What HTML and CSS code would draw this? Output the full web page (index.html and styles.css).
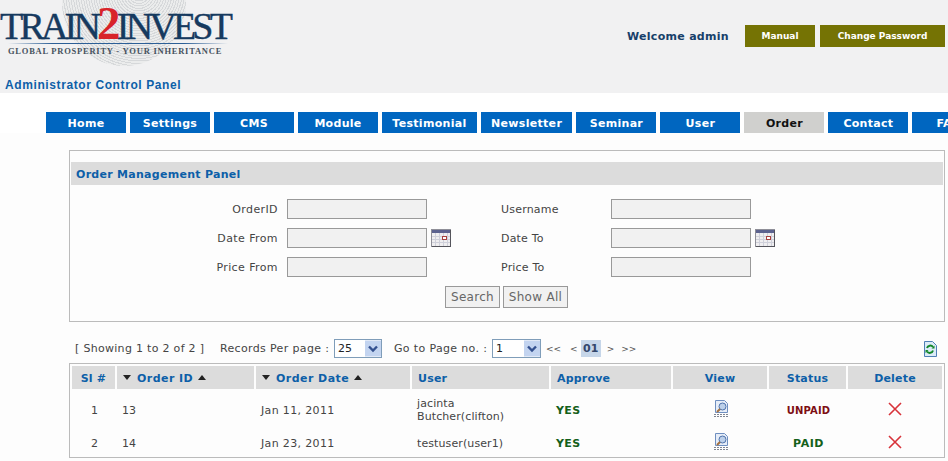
FILE: index.html
```html
<!DOCTYPE html>
<html lang="en">
<head>
  <meta charset="UTF-8">
  <title>Administrator Control Panel</title>
  <link rel="stylesheet" href="styles.css">
</head>
<body>
  <div class="header">
    <div class="brand">
      <div class="logo">
        <div class="swirl"></div>
        <div class="logo-name">TRAIN<span class="logo-two">2</span>INVEST</div>
        <div class="logo-rule"></div>
        <div class="logo-tag">GLOBAL PROSPERITY - YOUR INHERITANCE</div>
      </div>
      <div class="panel-name">Administrator Control Panel</div>
    </div>
    <div class="account">
      <span class="welcome">Welcome admin</span>
      <a class="olive-btn manual">Manual</a>
      <a class="olive-btn password">Change Password</a>
    </div>
  </div>

  <div class="nav">
    <a class="tab">Home</a>
    <a class="tab">Settings</a>
    <a class="tab">CMS</a>
    <a class="tab">Module</a>
    <a class="tab">Testimonial</a>
    <a class="tab">Newsletter</a>
    <a class="tab">Seminar</a>
    <a class="tab">User</a>
    <a class="tab active">Order</a>
    <a class="tab">Contact</a>
    <a class="tab">FAQs</a>
  </div>

  <div class="content">
    <div class="search-panel">
      <div class="panel-title">Order Management Panel</div>
      <div class="search-form">
        <label class="left-label">OrderID</label>
        <input class="field" type="text">
        <span></span>
        <label>Username</label>
        <input class="field" type="text">
        <span></span>

        <label class="left-label">Date From</label>
        <input class="field" type="text">
        <svg class="cal" width="20" height="18" viewBox="0 0 20 18">
          <rect x="0.5" y="0.5" width="19" height="17" fill="#efeef0" stroke="#8f8f98"/>
          <rect x="1" y="1" width="18" height="3" fill="#5c628f"/>
          <path d="M1 7.500h18M1 10.500h18M1 13.500h18M4.500 4v13M8.500 4v13M12.500 4v13M16.500 4v13" stroke="#cfd0da"/>
          <rect x="11.500" y="7.500" width="4" height="3" fill="#fff" stroke="#a8413f"/>
          <path d="M19.500 1v17M1 17.500h19" stroke="#55555c"/>
        </svg>
        <label>Date To</label>
        <input class="field" type="text">
        <svg class="cal" width="20" height="18" viewBox="0 0 20 18">
          <rect x="0.5" y="0.5" width="19" height="17" fill="#efeef0" stroke="#8f8f98"/>
          <rect x="1" y="1" width="18" height="3" fill="#5c628f"/>
          <path d="M1 7.500h18M1 10.500h18M1 13.500h18M4.500 4v13M8.500 4v13M12.500 4v13M16.500 4v13" stroke="#cfd0da"/>
          <rect x="11.500" y="7.500" width="4" height="3" fill="#fff" stroke="#a8413f"/>
          <path d="M19.500 1v17M1 17.500h19" stroke="#55555c"/>
        </svg>

        <label class="left-label">Price From</label>
        <input class="field" type="text">
        <span></span>
        <label>Price To</label>
        <input class="field" type="text">
        <span></span>
      </div>
      <div class="search-actions">
        <button class="plain-btn search">Search</button>
        <button class="plain-btn showall">Show All</button>
      </div>
    </div>

    <div class="pager">
      <span class="showing">[ Showing 1 to 2 of 2 ]</span>
      <span class="per-page">Records Per page :</span>
      <span class="select-box box-perpage">
        <select><option>25</option></select>
        <svg class="select-arrow" width="16" height="16" viewBox="0 0 16 16"><rect width="16" height="16" fill="#c3d4f0"/><path d="M4 6l4 4 4-4" fill="none" stroke="#33508f" stroke-width="2.400"/></svg>
      </span>
      <span class="go-to">Go to Page no. :</span>
      <span class="select-box box-page">
        <select><option>1</option></select>
        <svg class="select-arrow" width="16" height="16" viewBox="0 0 16 16"><rect width="16" height="16" fill="#c3d4f0"/><path d="M4 6l4 4 4-4" fill="none" stroke="#33508f" stroke-width="2.400"/></svg>
      </span>
      <a class="page-link first">&lt;&lt;</a>
      <a class="page-link prev">&lt;</a>
      <span class="page-now">01</span>
      <a class="page-link next">&gt;</a>
      <a class="page-link last">&gt;&gt;</a>
      <svg class="refresh" width="14" height="16" viewBox="0 0 14 16">
        <path d="M1.500 .5h8l4 4v11h-12z" fill="#dcebf8" stroke="#4f7fb5"/>
        <path d="M4 7a3.400 3.400 0 0 1 6-1M10 9.500a3.400 3.400 0 0 1-6 1" fill="none" stroke="#14872a" stroke-width="2"/>
        <path d="M8.500 7.500h3v-3zM5.500 9h-3v3z" fill="#14872a"/>
      </svg>
    </div>

    <div class="list-box">
      <table class="orders">
        <colgroup>
          <col class="c-sl"><col class="c-id"><col class="c-date"><col class="c-user">
          <col class="c-approve"><col class="c-view"><col class="c-status"><col class="c-delete">
        </colgroup>
        <tr>
          <th class="center">Sl #</th>
          <th class="sortable"><span class="sort down"></span>Order ID<span class="sort up"></span></th>
          <th class="sortable"><span class="sort down"></span>Order Date<span class="sort up"></span></th>
          <th>User</th>
          <th>Approve</th>
          <th class="center">View</th>
          <th class="center">Status</th>
          <th class="center">Delete</th>
        </tr>
        <tr class="tall">
          <td class="center">1</td>
          <td>13</td>
          <td class="date">Jan 11, 2011</td>
          <td>jacinta<br>Butcher(clifton)</td>
          <td class="yes">YES</td>
          <td class="center">
            <svg class="view-icon" width="15" height="17" viewBox="0 0 15 17">
              <path d="M1.500 .5h9l3 3v9h-12z" fill="#e6edf8" stroke="#6f8fc0"/>
              <circle cx="8.500" cy="6.500" r="3.500" fill="#bcd0ea" stroke="#4f74ad"/>
              <path d="M6 9l-3 3" stroke="#a5713f" stroke-width="2"/>
              <path d="M0 14.500h15M0 16.500h15" stroke="#7f8592" stroke-dasharray="2 1"/>
            </svg>
          </td>
          <td class="center unpaid">UNPAID</td>
          <td class="center">
            <svg class="del-icon" width="14" height="14" viewBox="0 0 14 14"><path d="M1 1l12 12M13 1L1 13" stroke="#d8333a" stroke-width="1.600"/></svg>
          </td>
        </tr>
        <tr class="short">
          <td class="center">2</td>
          <td>14</td>
          <td class="date">Jan 23, 2011</td>
          <td>testuser(user1)</td>
          <td class="yes">YES</td>
          <td class="center">
            <svg class="view-icon" width="15" height="17" viewBox="0 0 15 17">
              <path d="M1.500 .5h9l3 3v9h-12z" fill="#e6edf8" stroke="#6f8fc0"/>
              <circle cx="8.500" cy="6.500" r="3.500" fill="#bcd0ea" stroke="#4f74ad"/>
              <path d="M6 9l-3 3" stroke="#a5713f" stroke-width="2"/>
              <path d="M0 14.500h15M0 16.500h15" stroke="#7f8592" stroke-dasharray="2 1"/>
            </svg>
          </td>
          <td class="center paid">PAID</td>
          <td class="center">
            <svg class="del-icon" width="14" height="14" viewBox="0 0 14 14"><path d="M1 1l12 12M13 1L1 13" stroke="#d8333a" stroke-width="1.600"/></svg>
          </td>
        </tr>
      </table>
    </div>
  </div>
</body>
</html>
```

FILE: styles.css
```css
html, body {
  margin: 0;
  height: 461px;
  overflow: hidden;
}
body {
  width: 948px;
  background: #fdfdfd;
  font-family: "DejaVu Sans", Verdana, sans-serif;
  font-size: 11px;
  color: #444;
}

/* header */
.header {
  display: flex;
  justify-content: space-between;
  height: 93px;
  background: #f1f1f2;
}
.logo {
  position: relative;
  width: 240px;
  height: 70px;
}
.swirl {
  position: absolute;
  left: 62px;
  top: -60px;
  width: 124px;
  height: 126px;
  border-radius: 50%;
  background: repeating-radial-gradient(circle at 62% 42%, #d6d8da 0 1px, #ebecec 1px 2.500px);
}
.logo-name {
  position: absolute;
  left: 0;
  top: 3px;
  font-family: "Liberation Serif", serif;
  font-size: 38px;
  line-height: 46px;
  letter-spacing: -3.800px;
  color: #163a5f;
  -webkit-text-stroke: .4px #163a5f;
  white-space: nowrap;
}
.logo-two {
  font-size: 47px;
  line-height: 40px;
  font-weight: bold;
  color: #d8232a;
  -webkit-text-stroke: 0;
}
.logo-rule {
  position: absolute;
  left: 8px;
  top: 43px;
  width: 220px;
  height: 1px;
  background: linear-gradient(to right, #f1f1f2, #2c5f96 20%, #2c5f96 80%, #f1f1f2);
}
.logo-tag {
  position: absolute;
  left: 8px;
  top: 46px;
  font-family: "Liberation Serif", serif;
  font-weight: bold;
  font-size: 8.500px;
  line-height: 11px;
  letter-spacing: .76px;
  color: #46525e;
  white-space: nowrap;
}
.panel-name {
  margin: 7px 0 0 5px;
  font-family: "Liberation Sans", Arial, sans-serif;
  font-weight: bold;
  font-size: 12px;
  line-height: 16px;
  letter-spacing: .6px;
  color: #0d5fa8;
}
.account {
  display: flex;
  align-items: center;
  height: 22px;
  margin: 25px 3px 0 0;
}
.welcome {
  font-weight: bold;
  letter-spacing: .3px;
  color: #17406a;
  margin-right: 16px;
}
.olive-btn {
  display: block;
  height: 22px;
  line-height: 23px;
  text-align: center;
  background: #757304;
  color: #fff;
  font-size: 9px;
  font-weight: bold;
}
.manual {
  width: 70px;
  margin-right: 5px;
}
.password {
  width: 125px;
}

/* nav */
.nav {
  display: flex;
  gap: 4px;
  height: 40px;
  padding: 19px 0 0 46px;
  box-sizing: border-box;
  background: #fff;
}
.tab {
  flex: none;
  box-sizing: border-box;
  min-width: 80px;
  height: 21px;
  padding: 0 10.300px;
  line-height: 23px;
  text-align: center;
  background: #0066c0;
  color: #fff;
  font-weight: bold;
  letter-spacing: .3px;
}
.tab.active {
  background: #d0d0ce;
  color: #111;
}

/* search panel */
.content {
  width: 876px;
  margin: 17px 0 0 69px;
}
.search-panel {
  box-sizing: border-box;
  height: 172px;
  padding: 11px 1px 0;
  border: 1px solid #bbb;
}
.panel-title {
  box-sizing: border-box;
  height: 23px;
  padding: 1px 0 0 5px;
  line-height: 23px;
  background: #dcdcdc;
  color: #0d5fa8;
  font-weight: bold;
  letter-spacing: .28px;
}
.search-form {
  display: grid;
  grid-template-columns: 216px 140px 74px 110px 140px 24px;
  grid-auto-rows: 20px;
  row-gap: 9px;
  align-items: center;
  margin-top: 14px;
}
.search-form label {
  color: #444;
  letter-spacing: .2px;
}
.search-form .left-label {
  text-align: right;
  padding-right: 9px;
  letter-spacing: .4px;
}
.field {
  box-sizing: border-box;
  width: 140px;
  height: 20px;
  padding: 0;
  border: 1px solid #999;
  background: #f1f1f1;
}
.cal {
  margin-left: 4px;
}
.search-actions {
  display: flex;
  gap: 3px;
  margin: 9px 0 0 374px;
}
.plain-btn {
  box-sizing: border-box;
  height: 22px;
  padding: 0;
  border: 1px solid #999;
  background: #f1f1f1;
  color: #666;
  font-family: inherit;
  font-size: 12px;
  letter-spacing: .3px;
}
.search {
  width: 55px;
}
.showall {
  width: 65px;
}

/* pager */
.pager {
  display: flex;
  align-items: center;
  height: 19px;
  margin-top: 17px;
  color: #444;
  letter-spacing: .35px;
}
.showing {
  margin-left: 6px;
  width: 145px;
  letter-spacing: .3px;
  white-space: nowrap;
}
.per-page {
  width: 114px;
  white-space: nowrap;
}
.select-box {
  position: relative;
  flex: none;
  box-sizing: border-box;
  height: 19px;
  border: 1px solid #7f9db9;
  background: #fff;
}
.select-box select {
  display: block;
  width: 100%;
  height: 17px;
  padding: 0 0 0 3px;
  border: 0;
  background: none;
  appearance: none;
  font-family: inherit;
  font-size: 11px;
  color: #222;
}
.select-arrow {
  position: absolute;
  right: 0;
  top: 0;
  width: 16px;
  height: 17px;
}
.box-perpage {
  width: 48px;
  margin-right: 12px;
}
.go-to {
  width: 98px;
  white-space: nowrap;
}
.box-page {
  width: 49px;
}
.page-link {
  color: #555;
  font-size: 9px;
  letter-spacing: 0;
  white-space: nowrap;
}
.first {
  margin-left: 5px;
}
.prev {
  margin-left: 9px;
}
.page-now {
  box-sizing: border-box;
  width: 20px;
  height: 17px;
  line-height: 17px;
  margin-left: 3px;
  text-align: center;
  background: #c6d6e9;
  color: #33476b;
  font-weight: bold;
  letter-spacing: 0;
}
.next {
  margin-left: 6px;
}
.last {
  margin-left: 7px;
}
.refresh {
  margin-left: auto;
  margin-right: 8px;
}

/* order list */
.list-box {
  box-sizing: border-box;
  height: 95px;
  margin-top: 5px;
  padding: 2px;
  border: 1px solid #bbb;
}
.orders {
  table-layout: fixed;
  width: 870px;
  border-collapse: separate;
  border-spacing: 0;
}
.c-sl { width: 45px; }
.c-id { width: 139px; }
.c-date { width: 156px; }
.c-user { width: 139px; }
.c-approve { width: 122px; }
.c-view { width: 96px; }
.c-status { width: 79px; }
.c-delete { width: 94px; }
.orders th {
  height: 23px;
  padding: 1px 0 0 6px;
  box-sizing: border-box;
  border-right: 2px solid #fdfdfd;
  background: #dcdcdc;
  color: #0d5fa8;
  font-weight: bold;
  letter-spacing: .2px;
  text-align: left;
}
.orders th:last-child {
  border-right: 0;
}
.orders th.center {
  padding-left: 0;
  text-align: center;
}
.orders th.sortable {
  letter-spacing: .45px;
}
.orders td {
  padding: 0 0 0 5px;
  line-height: 13px;
  color: #444;
  letter-spacing: .1px;
}
.orders td.center {
  padding-left: 0;
  text-align: center;
}
.orders td.date {
  letter-spacing: .35px;
}
.tall td {
  height: 42px;
}
.short td {
  height: 24px;
}
.sort {
  display: inline-block;
  width: 0;
  height: 0;
  vertical-align: 2px;
  border-left: 4px solid transparent;
  border-right: 4px solid transparent;
}
.sort.down {
  margin-right: 6px;
  border-top: 5px solid #222;
}
.sort.up {
  margin-left: 5px;
  border-bottom: 5px solid #222;
}
.orders .yes {
  color: #14601a;
  font-weight: bold;
  letter-spacing: .4px;
}
.orders .unpaid {
  color: #7d0f14;
  font-weight: bold;
  font-size: 10px;
}
.orders .paid {
  color: #14601a;
  font-weight: bold;
  letter-spacing: .5px;
}
.view-icon, .del-icon {
  display: block;
  margin: 0 auto 3px;
}
```
